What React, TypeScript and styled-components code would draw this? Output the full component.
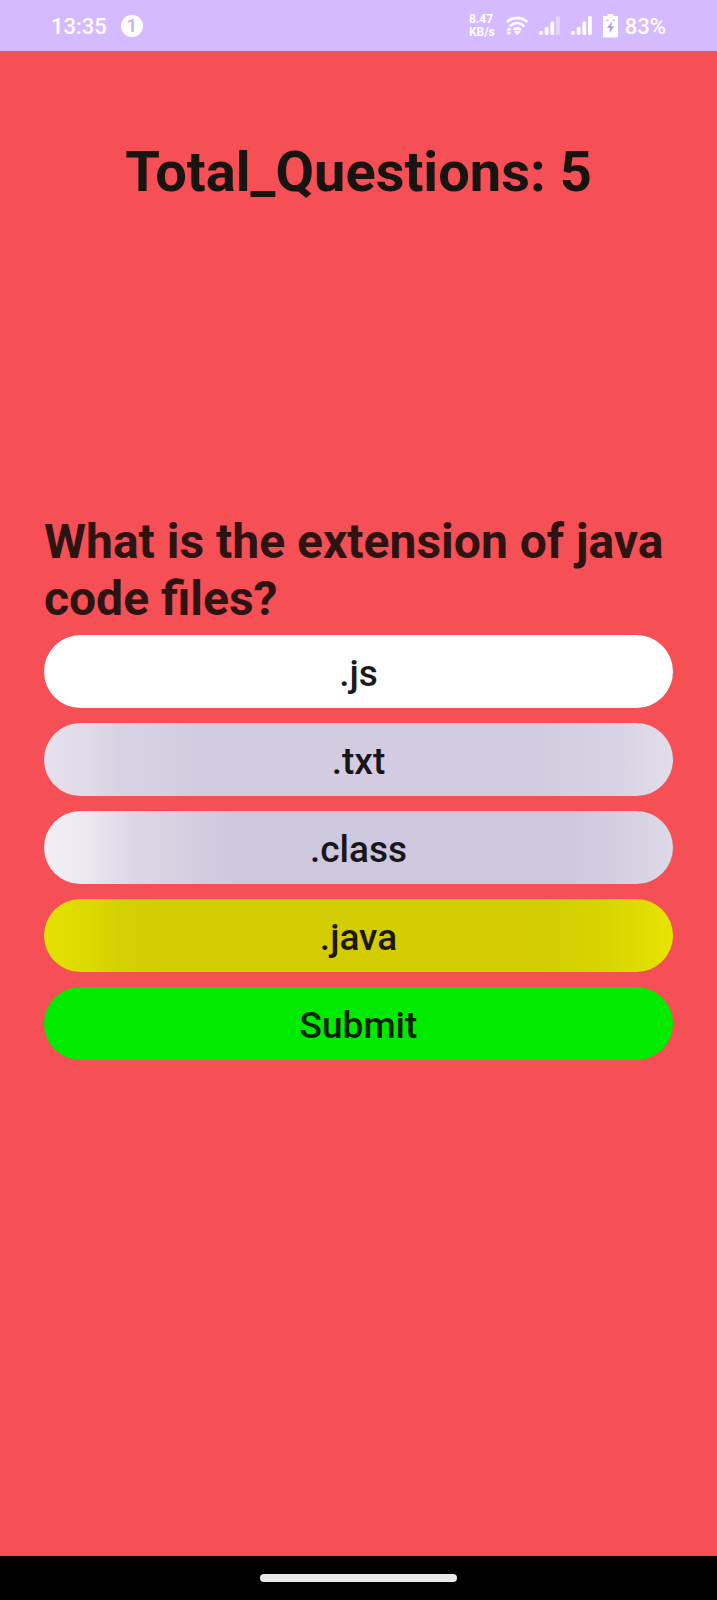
import React, { useState } from 'react';
import styled, { createGlobalStyle } from 'styled-components';

const GlobalStyle = createGlobalStyle`
  * { box-sizing: border-box; }
  body {
    margin: 0;
    background: #f64f55;
    font-family: Roboto, "Liberation Sans", sans-serif;
  }
`;

const Screen = styled.div`
  min-height: 100vh;
  display: flex;
  flex-direction: column;
`;

const StatusBar = styled.header`
  height: 51px;
  padding: 0 51px;
  display: flex;
  align-items: center;
  justify-content: space-between;
  background: #d5baff;
  color: #ffffff;
`;

const StatusGroup = styled.div<{ $gap: number }>`
  display: flex;
  align-items: center;
  gap: ${(p) => p.$gap}px;
`;

const StatusText = styled.span`
  padding-top: 2px;
  font-size: 22px;
  line-height: 26px;
  font-weight: 500;
`;

const Badge = styled.span`
  width: 22px;
  height: 22px;
  border-radius: 50%;
  background: #ffffff;
  color: #c9aef5;
  font-size: 19px;
  line-height: 22px;
  font-weight: 500;
  text-align: center;
`;

const Speed = styled.span`
  display: flex;
  flex-direction: column;
  align-items: flex-start;
  font-size: 12px;
  line-height: 13px;
  font-weight: 700;
`;

const Main = styled.main`
  flex: 1;
  padding: 88px 44px 0;
`;

const Title = styled.h1`
  margin: 0 0 308px;
  font-size: 56px;
  line-height: 66px;
  font-weight: 700;
  text-align: center;
  color: #171412;
`;

const Question = styled.h2`
  margin: 0 0 8px;
  font-size: 48px;
  line-height: 57px;
  font-weight: 700;
  color: #2d1413;
`;

const Answers = styled.form`
  display: flex;
  flex-direction: column;
  gap: 15px;
`;

const PillButton = styled.button<{ $fill: string; $ink: string }>`
  height: 73px;
  padding: 4px 24px 0;
  border: 0;
  border-radius: 37px;
  background: ${(p) => p.$fill};
  color: ${(p) => p.$ink};
  font-family: inherit;
  font-size: 37px;
  line-height: 44px;
  font-weight: 500;
  cursor: pointer;
`;

const NavBar = styled.footer`
  height: 44px;
  display: flex;
  align-items: center;
  justify-content: center;
  background: #000000;
`;

const NavHandle = styled.div`
  width: 197px;
  height: 8px;
  border-radius: 4px;
  background: #e9e7e8;
`;

const WifiIcon = () => (
  <svg width="22" height="20" viewBox="0 0 22 20" fill="none" stroke="#fff" strokeWidth="2.7" strokeLinecap="round">
    <path d="M1.6 5.2C7 .7 15 .7 20.4 5.2" />
    <path d="M4.8 9.6c3.800-3.200 8.800-3.200 12.600 0" />
    <path d="M8.8 13c1.800-1 3.600-.9 5.200.3" />
    <path d="M9 15.800h4.600L11.300 18.200z" fill="#fff" strokeWidth="1.4" strokeLinejoin="round" />
    <path d="M0 14.5 2.8 11l2.8 3.5zM0 15.8h5.6L2.8 19.3z" fill="#fff" stroke="none" />
  </svg>
);

const SignalIcon = ({ full }: { full: boolean }) => (
  <svg width="21" height="20" viewBox="0 0 21 20" fill="#fff">
    <rect x="0" y="15" width="3.8" height="4" rx="1.4" />
    <rect x="5.8" y="11" width="3.8" height="8" rx="1.2" />
    <rect x="11.4" y="5.5" width="3.8" height="13.5" rx="1.2" />
    <rect x="17" y="0" width="3.8" height="19" rx="1.2" opacity={full ? 1 : 0.4} />
  </svg>
);

const BatteryIcon = () => (
  <svg width="15" height="24" viewBox="0 0 15 24">
    <path d="M4.5 0h6v2H15v21.5H0V2h4.500z" fill="#fff" />
    <path d="M8.800 7.500 4 14h3l-.6 5L11.200 12.300H8.200z" fill="#b79be8" />
    <path d="M3 5.500h2.500v1.500H3zM9.500 5.500H12v1.500H9.500z" fill="#d5baff" />
  </svg>
);

const options = [
  { label: '.js', fill: '#ffffff', ink: '#1b191c' },
  {
    label: '.txt',
    fill: 'linear-gradient(90deg, #e6e1ee 0%, #e0dae9 6%, #d9d2e4 12%, #d3cce0 24%, #d3cce0 78%, #d8d1e3 90%, #e2dcec 100%)',
    ink: '#19161b',
  },
  {
    label: '.class',
    fill: 'linear-gradient(90deg, #f1eff3 0%, #ebe8f0 7%, #dcd7e7 14%, #d6cfe1 22%, #cec8de 30%, #cec8de 84%, #d6d0e2 93%, #ded9e8 100%)',
    ink: '#19161b',
  },
  {
    label: '.java',
    fill: 'linear-gradient(90deg, #e4e100 0%, #dcd900 7%, #d5d000 12%, #d2cc00 20%, #d2cc00 78%, #d9d500 90%, #e6e400 100%)',
    ink: '#1b1905',
  },
];

export default function App() {
  const [selected, setSelected] = useState('.java');

  return (
    <Screen>
      <GlobalStyle />
      <StatusBar>
        <StatusGroup $gap={14}>
          <StatusText>13:35</StatusText>
          <Badge>1</Badge>
        </StatusGroup>
        <StatusGroup $gap={11}>
          <Speed>
            <span>8.47</span>
            <span>KB/s</span>
          </Speed>
          <WifiIcon />
          <SignalIcon full={false} />
          <SignalIcon full />
          <StatusGroup $gap={7}>
            <BatteryIcon />
            <StatusText>83%</StatusText>
          </StatusGroup>
        </StatusGroup>
      </StatusBar>
      <Main>
        <Title>Total_Questions: 5</Title>
        <Question>What is the extension of java code files?</Question>
        <Answers onSubmit={(e) => e.preventDefault()}>
          {options.map((o) => (
            <PillButton
              key={o.label}
              type="button"
              $fill={o.fill}
              $ink={o.ink}
              aria-pressed={selected === o.label}
              onClick={() => setSelected(o.label)}
            >
              {o.label}
            </PillButton>
          ))}
          <PillButton type="submit" $fill="#00eb00" $ink="#032308">
            Submit
          </PillButton>
        </Answers>
      </Main>
      <NavBar>
        <NavHandle />
      </NavBar>
    </Screen>
  );
}
